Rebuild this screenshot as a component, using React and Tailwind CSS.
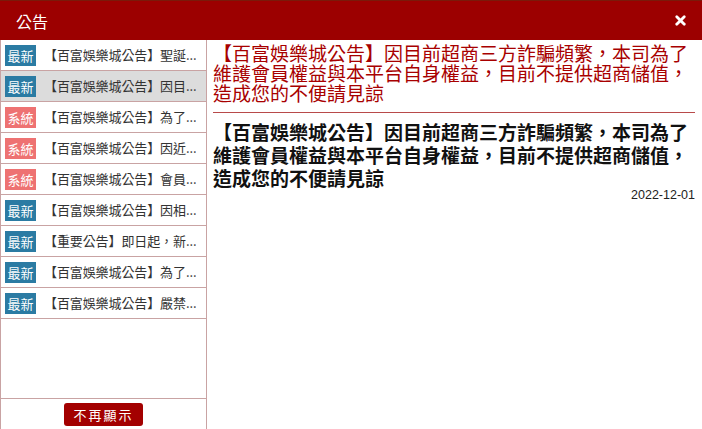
import { X } from "lucide-react";

const items = [
  { tag: "最新", text: "【百富娛樂城公告】聖誕..." },
  { tag: "最新", text: "【百富娛樂城公告】因目...", active: true },
  { tag: "系統", text: "【百富娛樂城公告】為了..." },
  { tag: "系統", text: "【百富娛樂城公告】因近..." },
  { tag: "系統", text: "【百富娛樂城公告】會員..." },
  { tag: "最新", text: "【百富娛樂城公告】因相..." },
  { tag: "最新", text: "【重要公告】即日起，新..." },
  { tag: "最新", text: "【百富娛樂城公告】為了..." },
  { tag: "最新", text: "【百富娛樂城公告】嚴禁..." },
];

const title =
  "【百富娛樂城公告】因目前超商三方詐騙頻繁，本司為了維護會員權益與本平台自身權益，目前不提供超商儲值，造成您的不便請見諒";

function App() {
  return (
    <div
      className="w-[702px] h-[429px] flex flex-col bg-white overflow-hidden"
      style={{ fontFamily: '"Noto Sans CJK TC", "Liberation Sans", sans-serif' }}
    >
      {/* Header */}
      <div className="h-[40px] shrink-0 bg-[#9c0000] border-t border-[#7a1a0a] flex items-center justify-between pl-[16px] pr-[14px]">
        <span className="text-white text-[16px] leading-none">公告</span>
        <X className="text-white w-[15px] h-[15px]" strokeWidth={4.5} />
      </div>

      <div className="flex-1 flex min-h-0">
        {/* List */}
        <div className="w-[207px] shrink-0 flex flex-col border-l border-r border-[#c9a3a3]">
          <div className="flex flex-col">
            {items.map((it, i) => (
              <div
                key={i}
                className={
                  "h-[31px] flex items-center border-b border-[#c9a3a3] pl-[4px] " +
                  (it.active ? "bg-[#dcdcdc]" : "bg-white")
                }
              >
                <span
                  className={
                    "h-[21px] w-[31px] flex items-center justify-center text-white text-[13px] leading-none " +
                    (it.tag === "最新" ? "bg-[#2b7ba3]" : "bg-[#ee7272]")
                  }
                >
                  {it.tag}
                </span>
                <span className="ml-[8px] text-[13px] text-[#333] whitespace-nowrap overflow-hidden tracking-[-0.1px]">
                  {it.text}
                </span>
              </div>
            ))}
          </div>
          <div className="flex-1" />
          <div className="h-[31px] shrink-0 border-t border-[#c9a3a3] flex items-center justify-center">
            <button className="h-[23px] w-[79px] rounded-[3px] bg-[#a30000] text-white text-[13px] tracking-[2px] leading-none">
              不再顯示
            </button>
          </div>
        </div>

        {/* Detail */}
        <div className="flex-1 pl-[6px] pr-[7px] pt-[3px]">
          <div className="text-[#a80000] text-[19px] leading-[20px] pb-[9px] border-b border-[#b84a4a]">
            {title}
          </div>
          <div className="mt-[7px] text-[#111] text-[19px] leading-[23px] font-bold">
            {title}
          </div>
          <div
            className="text-right text-[12.5px] leading-[13px] text-[#222]"
            style={{ fontFamily: '"Liberation Sans", Arial, sans-serif' }}
          >
            2022-12-01
          </div>
        </div>
      </div>
    </div>
  );
}

export default App;
